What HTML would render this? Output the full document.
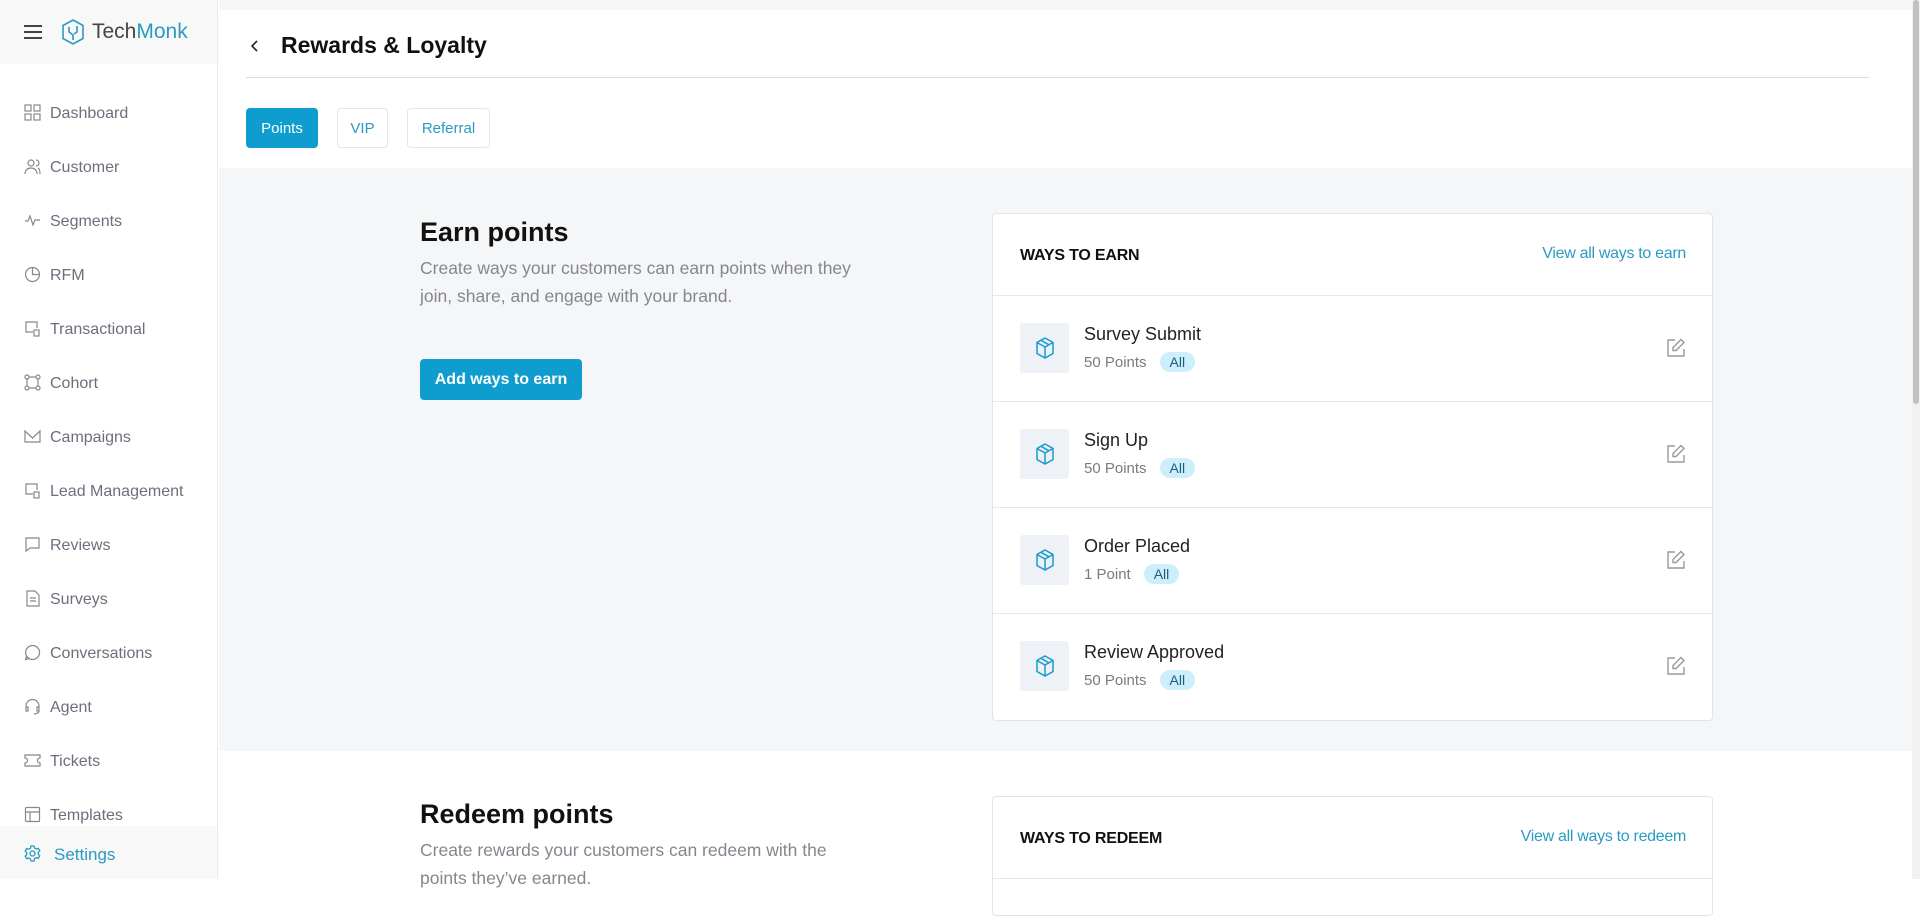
<!DOCTYPE html>
<html><head><meta charset="utf-8"><style>
*{box-sizing:border-box;margin:0;padding:0}
body{width:1920px;height:879px;overflow:hidden;font-family:"Liberation Sans",sans-serif;background:#fff;position:relative}
.sb{position:absolute;left:0;top:0;width:218px;height:879px;background:#fff;border-right:1px solid #ececec}
.sbh{height:64px;background:#f8f8f8;position:relative}
.nav{position:absolute;left:0;width:218px;height:30px;display:flex;align-items:center;font-size:16px;color:#6e6e7c}
.nav svg{position:absolute;left:24px;top:5px;width:17px;height:17px}
.nav span{position:absolute;left:50px}
.main{position:absolute;left:219px;top:0;right:8px;height:879px}
.top{position:absolute;left:0;right:0;top:0;height:10px;background:#f6f6f7}
.gray{position:absolute;left:0;right:0;top:168px;height:583px;background:#f5f6f7}
.tab{position:absolute;top:108px;height:40px;border:1px solid #e3e6ea;border-radius:4px;font-size:15px;color:#2a9ac2;display:flex;align-items:center;justify-content:center;background:#fff}
.card{position:absolute;left:773px;width:721px;background:#fff;border:1px solid #e2e4e7;border-radius:4px}
.ch{height:82px;border-bottom:1px solid #e6e7ea;position:relative}
.ch b{position:absolute;left:27px;top:33px;font-size:16px;color:#111;letter-spacing:-.2px}
.ch a{position:absolute;right:26px;top:31px;font-size:16px;color:#2a9ac2;text-decoration:none;letter-spacing:-.3px}
.row{height:106px;border-bottom:1px solid #e6e7ea;position:relative}
.row:last-child{border-bottom:none}
.ib{position:absolute;left:27px;top:27px;width:49px;height:50px;background:#eef1f6;border-radius:3px;display:flex;align-items:center;justify-content:center}
.t{position:absolute;left:91px;top:28px;font-size:18px;color:#222}
.s{position:absolute;left:91px;top:56px;font-size:15px;color:#7a7a85;display:flex;align-items:center}
.bd{margin-left:13px;background:#cdeefb;color:#1c5f7a;border-radius:10px;padding:2px 10px;font-size:14px}
.ed{position:absolute;right:26px;top:42px}
.desc{position:absolute;left:201px;width:452px;font-size:17.5px;line-height:28px;color:#868690}
</style></head><body>
<div class="sb">
 <div class="sbh">
  <div style="position:absolute;left:24px;top:25px;width:18px;height:2px;background:#444;box-shadow:0 6px 0 #444,0 12px 0 #444"></div>
  <svg style="position:absolute;left:61px;top:19px" width="24" height="26" viewBox="0 0 24 26" fill="none" stroke="#2a9ac2" stroke-width="1.6"><path d="M12 1l10 5.5v13L12 25 2 19.5v-13z"/><path d="M8 8v5l4 3v5M16 7v6l-3 2"/></svg>
  <div style="position:absolute;left:92px;top:20px;font-size:21px;color:#444">Tech<span style="color:#2a9ac2">Monk</span></div>
 </div>
 <div class="nav" style="top:99px"><svg viewBox="0 0 17 17" fill="none" stroke="#888" stroke-width="1.2"><rect x="1" y="1" width="6" height="6"/><rect x="10" y="1" width="6" height="6"/><rect x="1" y="10" width="6" height="6"/><rect x="10" y="10" width="6" height="6"/></svg><span>Dashboard</span></div>
 <div class="nav" style="top:153px"><svg viewBox="0 0 17 17" fill="none" stroke="#888" stroke-width="1.2"><circle cx="7" cy="5" r="3"/><path d="M1 16c0-4 3-6 6-6s6 2 6 6M12 2a3 3 0 010 6M14 10c2 1 2 4 2 6"/></svg><span>Customer</span></div>
 <div class="nav" style="top:207px"><svg viewBox="0 0 17 17" fill="none" stroke="#888" stroke-width="1.2"><path d="M1 9h3l2-5 3 9 2-5h5"/></svg><span>Segments</span></div>
 <div class="nav" style="top:261px"><svg viewBox="0 0 17 17" fill="none" stroke="#888" stroke-width="1.2"><circle cx="8.5" cy="8.5" r="7"/><path d="M8.5 1.5v7h7"/></svg><span>RFM</span></div>
 <div class="nav" style="top:315px"><svg viewBox="0 0 17 17" fill="none" stroke="#888" stroke-width="1.2"><path d="M9 12H2V2h11v6"/><rect x="10" y="10" width="5" height="6"/></svg><span>Transactional</span></div>
 <div class="nav" style="top:369px"><svg viewBox="0 0 17 17" fill="none" stroke="#888" stroke-width="1.2"><circle cx="3" cy="3" r="2"/><circle cx="14" cy="3" r="2"/><circle cx="3" cy="14" r="2"/><circle cx="14" cy="14" r="2"/><path d="M5 3h7M5 14h7M3 5v7M14 5v7"/></svg><span>Cohort</span></div>
 <div class="nav" style="top:423px"><svg viewBox="0 0 17 17" fill="none" stroke="#888" stroke-width="1.2"><path d="M1 3v11h15V3L8.5 10z"/></svg><span>Campaigns</span></div>
 <div class="nav" style="top:477px"><svg viewBox="0 0 17 17" fill="none" stroke="#888" stroke-width="1.2"><path d="M9 12H2V2h11v6"/><rect x="10" y="10" width="5" height="6"/></svg><span>Lead Management</span></div>
 <div class="nav" style="top:531px"><svg viewBox="0 0 17 17" fill="none" stroke="#888" stroke-width="1.2"><path d="M2 2h13v10H6l-4 3z"/></svg><span>Reviews</span></div>
 <div class="nav" style="top:585px"><svg viewBox="0 0 17 17" fill="none" stroke="#888" stroke-width="1.2"><path d="M3 1h8l4 4v11H3z M6 8h6M6 11h6"/></svg><span>Surveys</span></div>
 <div class="nav" style="top:639px"><svg viewBox="0 0 17 17" fill="none" stroke="#888" stroke-width="1.2"><path d="M8.5 1.5a7 7 0 11-6 10.5L1.5 15.5l3.5-1A7 7 0 018.5 1.5z"/></svg><span>Conversations</span></div>
 <div class="nav" style="top:693px"><svg viewBox="0 0 17 17" fill="none" stroke="#888" stroke-width="1.2"><path d="M2 10V8a6.5 6.5 0 0113 0v2M2 9h2v4H2zM13 9h2v4h-2zM15 13c0 2-3 3-5 3"/></svg><span>Agent</span></div>
 <div class="nav" style="top:747px"><svg viewBox="0 0 17 17" fill="none" stroke="#888" stroke-width="1.2"><path d="M1 3h15v3a2.5 2.5 0 000 5v3H1v-3a2.5 2.5 0 000-5z"/></svg><span>Tickets</span></div>
 <div class="nav" style="top:801px"><svg viewBox="0 0 17 17" fill="none" stroke="#888" stroke-width="1.2"><rect x="1.5" y="1.5" width="14" height="14" rx="1"/><path d="M1.5 6h14M6 6v9.5"/></svg><span>Templates</span></div>
 <div style="position:absolute;left:0;top:826px;width:217px;height:53px;background:#f8f8f8"></div>
 <div class="nav" style="top:840px;color:#2a9ac2;font-size:17px"><svg viewBox="0 0 17 17" fill="none" stroke="#2a9ac2" stroke-width="1.3"><circle cx="8.5" cy="8.5" r="2.5"/><path d="M7 1h3l.5 2 1.8 1 2-.7 1.5 2.6-1.5 1.4v2l1.5 1.4-1.5 2.6-2-.7-1.8 1L10 16H7l-.5-2-1.8-1-2 .7-1.5-2.6 1.5-1.4v-2L1.2 6.1l1.5-2.6 2 .7 1.8-1z"/></svg><span style="left:54px">Settings</span></div>
</div>
<div class="main">
 <div class="top"></div>
 <svg style="position:absolute;left:31px;top:39px" width="10" height="14" viewBox="0 0 10 14" fill="none" stroke="#222" stroke-width="1.6"><path d="M7 2L2 7l5 5"/></svg>
 <div style="position:absolute;left:62px;top:32px;font-size:23px;font-weight:bold;color:#111">Rewards &amp; Loyalty</div>
 <div style="position:absolute;left:27px;width:1623px;top:77px;height:1px;background:#dcdcdc"></div>
 <div class="tab" style="left:27px;width:72px;background:#0f9dcf;border-color:#0f9dcf;color:#fff">Points</div>
 <div class="tab" style="left:118px;width:51px">VIP</div>
 <div class="tab" style="left:188px;width:83px">Referral</div>
 <div class="gray"></div>
 <div style="position:absolute;left:201px;top:217px;font-size:27px;font-weight:bold;color:#111">Earn points</div>
 <div class="desc" style="top:254px">Create ways your customers can earn points when they join, share, and engage with your brand.</div>
 <div style="position:absolute;left:201px;top:359px;width:162px;height:41px;background:#0f9dcf;border-radius:4px;color:#fff;font-size:16px;font-weight:bold;display:flex;align-items:center;justify-content:center">Add ways to earn</div>
 <div class="card" style="top:213px">
  <div class="ch"><b>WAYS TO EARN</b><a>View all ways to earn</a></div>
  <div class="row"><div class="ib"><svg width="20" height="22" viewBox="0 0 20 22" fill="none" stroke="#1a9ccf" stroke-width="1.5"><path d="M10 1l8 4.5v11L10 21 2 16.5v-11z M2 5.5L10 10l8-4.5M10 10v11M6 3.3l8 4.5"/></svg></div><div class="t">Survey Submit</div><div class="s">50 Points<span class="bd">All</span></div><svg class="ed" width="20" height="20" viewBox="0 0 20 20" fill="none" stroke="#999" stroke-width="1.4"><path d="M9 2H2v16h16v-7M15 1.5l3 3-8 8H7v-3z"/></svg></div>
  <div class="row"><div class="ib"><svg width="20" height="22" viewBox="0 0 20 22" fill="none" stroke="#1a9ccf" stroke-width="1.5"><path d="M10 1l8 4.5v11L10 21 2 16.5v-11z M2 5.5L10 10l8-4.5M10 10v11M6 3.3l8 4.5"/></svg></div><div class="t">Sign Up</div><div class="s">50 Points<span class="bd">All</span></div><svg class="ed" width="20" height="20" viewBox="0 0 20 20" fill="none" stroke="#999" stroke-width="1.4"><path d="M9 2H2v16h16v-7M15 1.5l3 3-8 8H7v-3z"/></svg></div>
  <div class="row"><div class="ib"><svg width="20" height="22" viewBox="0 0 20 22" fill="none" stroke="#1a9ccf" stroke-width="1.5"><path d="M10 1l8 4.5v11L10 21 2 16.5v-11z M2 5.5L10 10l8-4.5M10 10v11M6 3.3l8 4.5"/></svg></div><div class="t">Order Placed</div><div class="s">1 Point<span class="bd">All</span></div><svg class="ed" width="20" height="20" viewBox="0 0 20 20" fill="none" stroke="#999" stroke-width="1.4"><path d="M9 2H2v16h16v-7M15 1.5l3 3-8 8H7v-3z"/></svg></div>
  <div class="row"><div class="ib"><svg width="20" height="22" viewBox="0 0 20 22" fill="none" stroke="#1a9ccf" stroke-width="1.5"><path d="M10 1l8 4.5v11L10 21 2 16.5v-11z M2 5.5L10 10l8-4.5M10 10v11M6 3.3l8 4.5"/></svg></div><div class="t">Review Approved</div><div class="s">50 Points<span class="bd">All</span></div><svg class="ed" width="20" height="20" viewBox="0 0 20 20" fill="none" stroke="#999" stroke-width="1.4"><path d="M9 2H2v16h16v-7M15 1.5l3 3-8 8H7v-3z"/></svg></div>
 </div>
 <div style="position:absolute;left:201px;top:799px;font-size:27px;font-weight:bold;color:#111">Redeem points</div>
 <div class="desc" style="top:836px">Create rewards your customers can redeem with the points they’ve earned.</div>
 <div class="card" style="top:796px;height:120px">
  <div class="ch"><b>WAYS TO REDEEM</b><a>View all ways to redeem</a></div>
 </div>
</div>
<div style="position:absolute;right:0;top:0;width:8px;height:879px;background:#f1f1f1"></div>
<div style="position:absolute;right:1px;top:0;width:6px;height:404px;background:#c1c1c1;border-radius:3px"></div>
</body></html>
